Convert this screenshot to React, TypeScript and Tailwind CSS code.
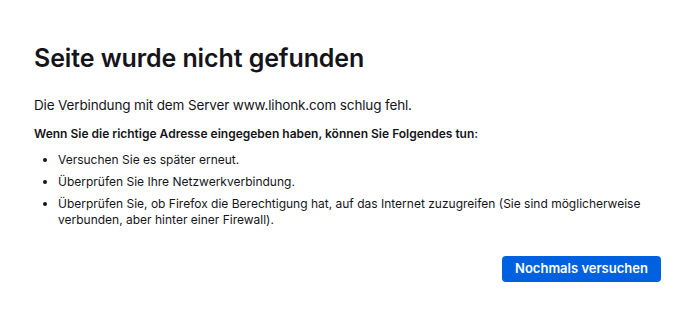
export default function App() {
  return (
    <div className="w-[695px] h-[320px] bg-white text-[#15141a] [font-family:Inter,'Liberation_Sans',sans-serif] pl-[34px] pr-[34px] pt-[40px]">
      <h1 className="text-[25px] font-semibold leading-[36px] tracking-[-0.1px]">Seite wurde nicht gefunden</h1>
      <p className="mt-[19px] text-[13.5px] leading-[20px] tracking-[-0.15px]">
        Die Verbindung mit dem Server www.lihonk.com schlug fehl.
      </p>
      <p className="mt-[10px] text-[12px] font-semibold leading-[18px]">
        Wenn Sie die richtige Adresse eingegeben haben, können Sie Folgendes tun:
      </p>
      <ul className="mt-[9px] pl-[24px] list-disc text-[12px] leading-[16px] flex flex-col gap-[6px]">
        <li>Versuchen Sie es später erneut.</li>
        <li>Überprüfen Sie Ihre Netzwerkverbindung.</li>
        <li>
          Überprüfen Sie, ob Firefox die Berechtigung hat, auf das Internet zuzugreifen (Sie sind möglicherweise
          verbunden, aber hinter einer Firewall).
        </li>
      </ul>
      <div className="flex justify-end mt-[28px]">
        <button className="w-[159px] h-[26px] rounded-[4px] bg-[#0061e0] text-white text-[13px] font-semibold">
          Nochmals versuchen
        </button>
      </div>
    </div>
  )
}
